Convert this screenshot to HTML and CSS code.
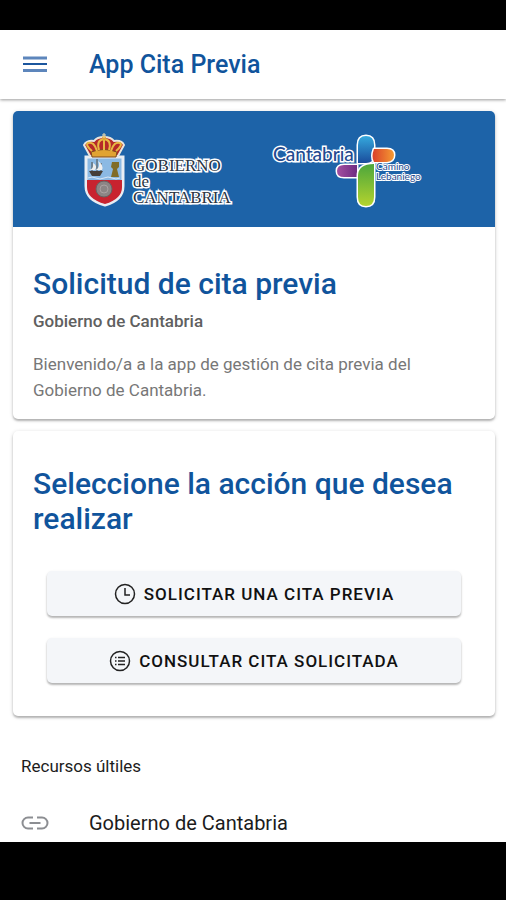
FILE: index.html
```
<!DOCTYPE html>
<html lang="es">
<head>
	<meta charset="utf-8">
	<meta name="viewport" content="width=device-width, initial-scale=1">
	<title>App Cita Previa</title>
	<link rel="stylesheet" href="styles.css">
</head>
<body>
	<div class="app">
		<header class="toolbar">
			<button class="menu-button" type="button" aria-label="Menú">
				<svg width="24" height="18" viewBox="0 0 24 18">
					<path d="M0 2h24M0 14.500h24" stroke="#5d86bc" stroke-width="3"/>
					<path d="M0 8h24" stroke="#1b569e" stroke-width="2"/>
				</svg>
			</button>
			<h1>App Cita Previa</h1>
		</header>

		<main>
			<section class="card">
				<div class="banner">
					<svg viewBox="0 0 482 116" role="img" aria-label="Gobierno de Cantabria, Camino Lebaniego">
						<defs>
							<linearGradient id="blue" x1="0" y1="0" x2="0" y2="1">
								<stop offset="0" stop-color="#35a9dd"/>
								<stop offset="1" stop-color="#1a4c9c"/>
							</linearGradient>
							<linearGradient id="orange" x1="0" y1="0" x2="1" y2="0">
								<stop offset="0" stop-color="#d9402a"/>
								<stop offset="1" stop-color="#f59a32"/>
							</linearGradient>
							<linearGradient id="purple" x1="0" y1="0" x2="1" y2="0">
								<stop offset="0" stop-color="#a44fa0"/>
								<stop offset="1" stop-color="#6d2c82"/>
							</linearGradient>
							<linearGradient id="green" x1="0" y1="0" x2="0" y2="1">
								<stop offset="0" stop-color="#4ca63c"/>
								<stop offset="1" stop-color="#b4d32e"/>
							</linearGradient>
						</defs>

						<!-- escudo -->
						<path d="M73 46h37v29q0 14-18 19-19-5-19-19z" fill="#8bb9e3" stroke="#e8edf3" stroke-width="3"/>
						<path d="M74 69h35v7q0 12-17 17-18-5-18-17z" fill="#c8232f"/>
						<circle cx="91" cy="78" r="8" fill="#8c8585" stroke="#696262"/>
						<circle cx="91" cy="78" r="4" fill="none" stroke="#aaa2a2"/>
						<path d="M76 60h14l-3 5h-8z" fill="#463f38"/>
						<path d="M79 51v9M84 48v12M88 52v8" stroke="#4f4a43"/>
						<path d="M76 59q5-1 4-7 5 3 2 7zM83 59q5-3 2-9 6 4 4 9z" fill="#eee"/>
						<path d="M99 51h7v5l-2 2 2 8h-8l2-8-2-2z" fill="#806c28"/>
						<path d="M75 67q4-2 8 0t8 0 8 0 8 0" fill="none" stroke="#d9e8f6"/>
						<path d="M77 45l-6-11q3-5 10-4 3-4 10-4t10 4q8-1 10 4l-6 11z" fill="#b62929" stroke="#e9e5dc" stroke-width="2"/>
						<path d="M78 41q13-5 26 0l-1 5H79z" fill="#e1a332" stroke="#7c4a1e"/>
						<path d="M79 40q-7-6-4-8 6-2 9 8M86 39q-3-10 5-11 8 1 5 11M98 40q3-10 9-8 3 2-4 8M91 28v11" fill="none" stroke="#e7b843" stroke-width="2"/>
						<circle cx="91" cy="27" r="2" fill="#dfa235"/>
						<path d="M91 22v5M89 24h4" stroke="#f0dfae"/>
						<g class="gov-text">
							<text x="120" y="60">GOBIERNO</text>
							<text x="120" y="76">de</text>
							<text x="120" y="92">CANTABRIA</text>
						</g>

						<!-- cruz Cantabria -->
						<g stroke="#fff" stroke-width="3" stroke-linejoin="round" paint-order="stroke">
							<path d="M345 52V34q0-9 8-9t8 9v10q0 8-8 8z" fill="url(#blue)"/>
							<path d="M361 38h13q7 0 7 6t-7 7h-13q-3-5 0-13z" fill="url(#orange)"/>
							<path d="M344 54h-13q-7 0-7 6t7 6h13z" fill="url(#purple)"/>
							<path d="M345 65q0-12 16-12v33q0 9-8 9t-8-9z" fill="url(#green)"/>
						</g>
						<text class="cantabria-text" x="260" y="50">Cantabria</text>
						<g class="camino-text">
							<text x="363" y="59">Camino</text>
							<text x="363" y="69">Lebaniego</text>
						</g>
					</svg>
				</div>
				<div class="card-header">
					<h2>Solicitud de cita previa</h2>
					<h3>Gobierno de Cantabria</h3>
				</div>
				<p class="welcome">Bienvenido/a a la app de gestión de cita previa del Gobierno de Cantabria.</p>
			</section>

			<section class="card">
				<div class="card-header">
					<h2>Seleccione la acción que desea realizar</h2>
				</div>
				<div class="actions">
					<button class="action" type="button">
						<svg width="22" height="22" viewBox="0 0 22 22">
							<circle cx="11" cy="11" r="9.500"/>
							<path d="M11 5v7h5"/>
						</svg>
						Solicitar una cita previa
					</button>
					<button class="action" type="button">
						<svg width="22" height="22" viewBox="0 0 22 22">
							<circle cx="11" cy="11" r="9.500"/>
							<path d="M9 7.500h7M9 11h7M9 14.500h7M6 7.500h1.500M6 11h1.500M6 14.500h1.500"/>
						</svg>
						Consultar cita solicitada
					</button>
				</div>
			</section>

			<section class="resources">
				<h4>Recursos últiles</h4>
				<a class="item" href="#">
					<svg width="28" height="28" viewBox="0 0 28 28">
						<path d="M12 8.500H7a5.500 5.500 0 0 0 0 11h5M16 8.500h5a5.500 5.500 0 0 1 0 11h-5M8.500 14h11"/>
					</svg>
					Gobierno de Cantabria
				</a>
			</section>
		</main>
	</div>
</body>
</html>
```
FILE: styles.css
```
* {
	box-sizing: border-box;
}

body {
	margin: 0;
	background: #000;
	color: #1c1c1c;
	font-family: Roboto, "Liberation Sans", sans-serif;
}

h1, h2, h3, h4, p {
	margin: 0;
}

svg {
	display: block;
	flex: none;
}

/* black system bars above and below the app */
.app {
	display: flex;
	flex-direction: column;
	height: 100vh;
	padding: 30px 0 58px;
}

.toolbar {
	display: flex;
	align-items: center;
	gap: 42px;
	flex: none;
	height: 69px;
	padding: 0 23px;
	background: #fff;
	color: #10549c;
	box-shadow: 0 1px 3px rgba(0, 0, 0, 0.4);
	z-index: 1;
}

.toolbar h1 {
	font-size: 25px;
	font-weight: 500;
}

.menu-button {
	padding: 0;
	border: none;
	background: none;
}

main {
	flex: 1;
	min-height: 0;
	padding: 12px 11px 0 13px;
	background: #fff;
	overflow: hidden;
}

.card {
	margin-bottom: 12px;
	border-radius: 5px;
	background: #fff;
	box-shadow: 0 2px 2px rgba(0, 0, 0, 0.22), 0 1px 4px rgba(0, 0, 0, 0.16);
	overflow: hidden;
}

.banner {
	background: #1d63a8;
}

.banner svg {
	width: 100%;
}

.gov-text {
	fill: #2b3442;
	stroke: #fff;
	stroke-width: 3px;
	paint-order: stroke;
	font: 17px "Liberation Serif", serif;
}

.cantabria-text {
	fill: #234a90;
	stroke: #fff;
	stroke-width: 3px;
	paint-order: stroke;
	font: 500 19px Lato, sans-serif;
}

.camino-text {
	fill: #234a90;
	stroke: #fff;
	stroke-width: 2px;
	paint-order: stroke;
	font: 10px Lato, sans-serif;
}

.card-header {
	padding: 39px 20px 0;
}

.card h2 {
	color: #10549c;
	font-size: 30px;
	font-weight: 500;
	line-height: 35px;
}

.card h3 {
	margin-top: 10px;
	color: #606060;
	font-size: 17px;
	font-weight: 500;
	line-height: 20px;
}

.welcome {
	padding: 20px 20px 16px;
	color: #777;
	font-size: 17px;
	line-height: 26px;
}

.card + .card .card-header {
	padding-top: 35px;
}

.actions {
	display: flex;
	flex-direction: column;
	gap: 22px;
	padding: 35px 34px 33px;
}

.action {
	display: flex;
	align-items: center;
	justify-content: center;
	gap: 8px;
	height: 45px;
	border: none;
	border-radius: 5px;
	background: #f4f6f9;
	color: #111;
	font-family: inherit;
	font-size: 17px;
	font-weight: 500;
	letter-spacing: 1px;
	text-transform: uppercase;
	box-shadow: 0 2px 2px rgba(0, 0, 0, 0.24), 0 1px 3px rgba(0, 0, 0, 0.1);
}

.action svg {
	fill: none;
	stroke: #222;
	stroke-width: 1.5px;
}

.resources h4 {
	padding: 28px 8px 0;
	font-size: 17px;
	font-weight: 400;
	line-height: 20px;
}

.item {
	display: flex;
	align-items: center;
	gap: 40px;
	height: 58px;
	margin-top: 18px;
	padding: 0 8px;
	color: #1c1c1c;
	font-size: 20px;
	text-decoration: none;
}

.item svg {
	fill: none;
	stroke: #8c8e92;
	stroke-width: 2px;
}
```
